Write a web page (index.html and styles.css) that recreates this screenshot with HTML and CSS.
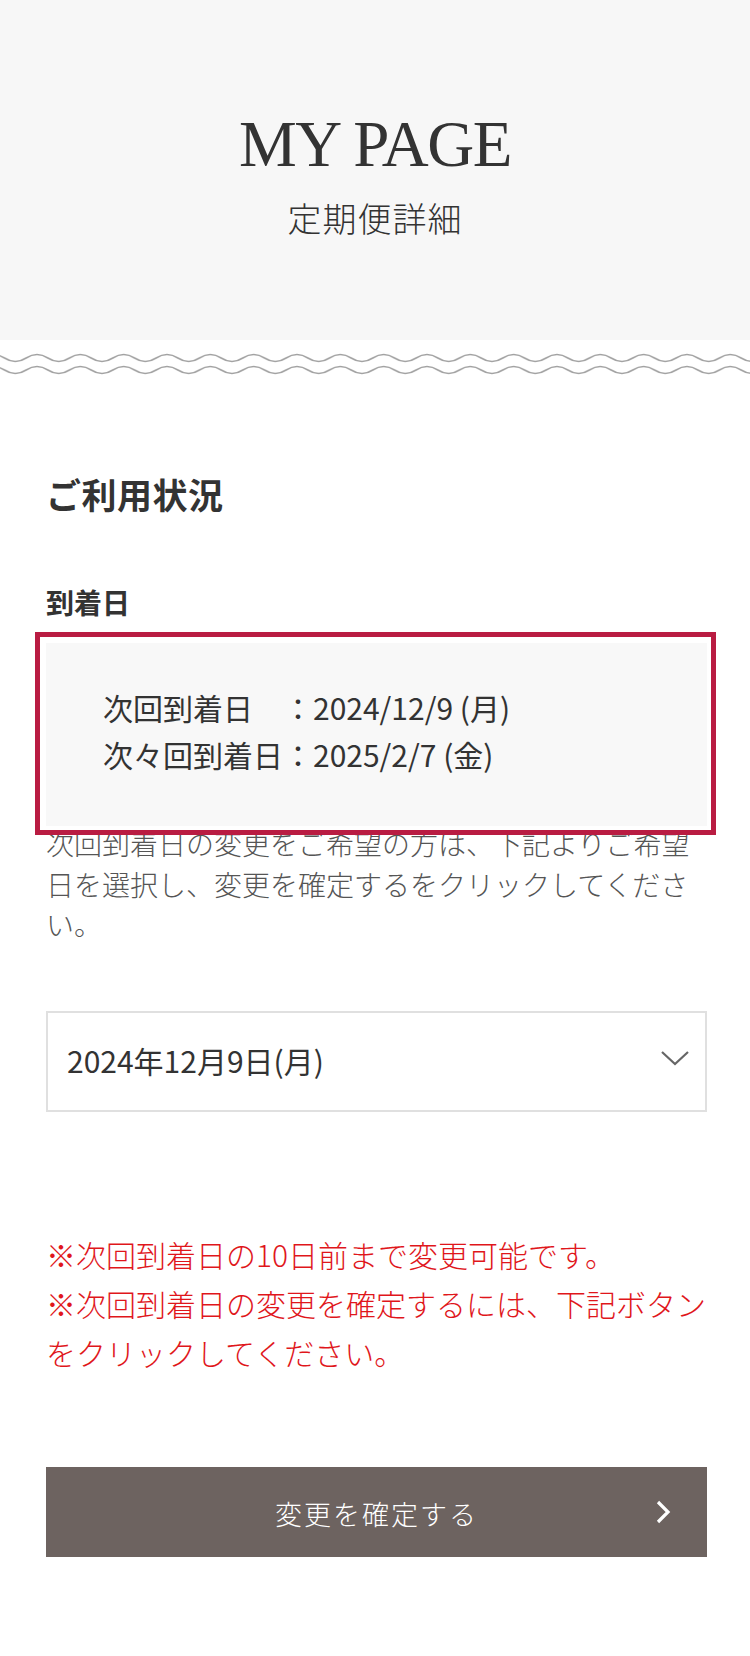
FILE: index.html
```html
<!DOCTYPE html>
<html lang="ja">
<head>
<meta charset="utf-8">
<title>MY PAGE 定期便詳細</title>
<link rel="stylesheet" href="styles.css">
</head>
<body>
<header class="hero">
  <h1 class="hero-title">MY PAGE</h1>
  <p class="hero-sub">定期便詳細</p>
</header>
<svg class="waves" width="750" height="28" viewBox="0 0 750 28" aria-hidden="true">
  <defs>
    <pattern id="wave" patternUnits="userSpaceOnUse" width="43.33" height="28" patternTransform="translate(-6.3 0)">
      <path d="M0,4.5 C10.83,4.5 10.83,11.5 21.67,11.5 S32.5,4.5 43.33,4.5" fill="none" stroke="#a3a3a3" stroke-width="1.6"/>
      <path d="M0,16.5 C10.83,16.5 10.83,23.5 21.67,23.5 S32.5,16.5 43.33,16.5" fill="none" stroke="#a3a3a3" stroke-width="1.6"/>
    </pattern>
  </defs>
  <rect x="0" y="0" width="750" height="28" fill="url(#wave)"/>
</svg>
<main class="content">
  <h2 class="section-title">ご利用状況</h2>
  <h3 class="sub-title">到着日</h3>
  <div class="dates">
    <div class="date-row">次回到着日　：2024/12/9 (月)</div>
    <div class="date-row">次々回到着日：2025/2/7 (金)</div>
  </div>
  <p class="desc">次回到着日の変更をご希望の方は、下記よりご希望日を選択し、変更を確定するをクリックしてください。</p>
  <div class="select">
    <span class="select-value">2024年12月9日(月)</span>
    <svg class="select-arrow" width="30" height="18" viewBox="0 0 30 18" aria-hidden="true">
      <path d="M2,2 L15,14 L28,2" fill="none" stroke="#666" stroke-width="2.2"/>
    </svg>
  </div>
  <div class="notes">
    <p class="note">※次回到着日の10日前まで変更可能です。</p>
    <p class="note">※次回到着日の変更を確定するには、下記ボタンをクリックしてください。</p>
  </div>
  <div class="btn">
    <span class="btn-spacer"></span>
    <span class="btn-label">変更を確定する</span>
    <svg class="btn-arrow" width="16" height="24" viewBox="0 0 16 24" aria-hidden="true">
      <path d="M3,2 L13,12 L3,22" fill="none" stroke="#fff" stroke-width="3.2"/>
    </svg>
  </div>
</main>
</body>
</html>
```
FILE: styles.css
```css
* { box-sizing: border-box; }
html, body { margin: 0; padding: 0; background: #fff; }
body {
  width: 750px;
  font-family: "Noto Sans CJK JP", "Noto Sans", sans-serif;
  color: #333;
}
.hero {
  height: 340px;
  background: #f7f7f7;
  padding-top: 112px;
  text-align: center;
}
.hero-title {
  margin: 0;
  font-family: "Liberation Serif", serif;
  font-weight: 400;
  font-size: 65px;
  line-height: 65px;
  letter-spacing: -1.5px;
  color: #333;
}
.hero-sub {
  margin: 24px 0 0;
  font-size: 34px;
  line-height: 34px;
  font-weight: 300;
  letter-spacing: 1px;
  color: #333;
}
.waves { display: block; margin-top: 10px; }
.content { padding: 0 43px 0 46px; }
.section-title {
  margin: 98px 0 0;
  font-size: 35px;
  line-height: 35px;
  font-weight: 700;
  letter-spacing: 0.5px;
  color: #333;
}
.sub-title {
  margin: 77px 0 0;
  font-size: 28px;
  line-height: 28px;
  font-weight: 700;
  color: #333;
}
.dates {
  position: relative;
  margin-top: 27px;
  background: #f8f8f8;
  padding: 41px 20px 48px 57px;
  font-size: 30px;
  line-height: 47px;
  color: #333;
}
.dates::after {
  content: "";
  position: absolute;
  top: -11px;
  left: -11px;
  right: -9px;
  bottom: -9px;
  border: 5px solid #b91c42;
  z-index: 2;
}
.date-row { white-space: nowrap; }
.desc {
  margin: -3px 0 0;
  font-size: 28px;
  line-height: 40.5px;
  font-weight: 300;
  color: #555;
}
.select {
  margin-top: 66px;
  height: 101px;
  border: 2px solid #e0e0e0;
  display: flex;
  align-items: center;
  justify-content: space-between;
  padding: 0 15px 0 19px;
  font-size: 30px;
  color: #333;
}
.select-value { line-height: 40px; margin-top: -2px; }
.select-arrow { display: block; margin-top: -4px; }
.notes { margin-top: 118px; }
.note {
  margin: 0;
  font-size: 30px;
  line-height: 49px;
  font-weight: 300;
  color: #e0161b;
}
.btn {
  margin-top: 90px;
  height: 90px;
  background: #6d6360;
  display: grid;
  grid-template-columns: 1fr auto 1fr;
  align-items: center;
  padding: 0 36px;
  color: #fff;
}
.btn-label {
  font-size: 27px;
  letter-spacing: 2px;
  font-weight: 300;
  line-height: 40px;
  margin-top: 4px;
}
.btn-arrow { justify-self: end; display: block; }
```
